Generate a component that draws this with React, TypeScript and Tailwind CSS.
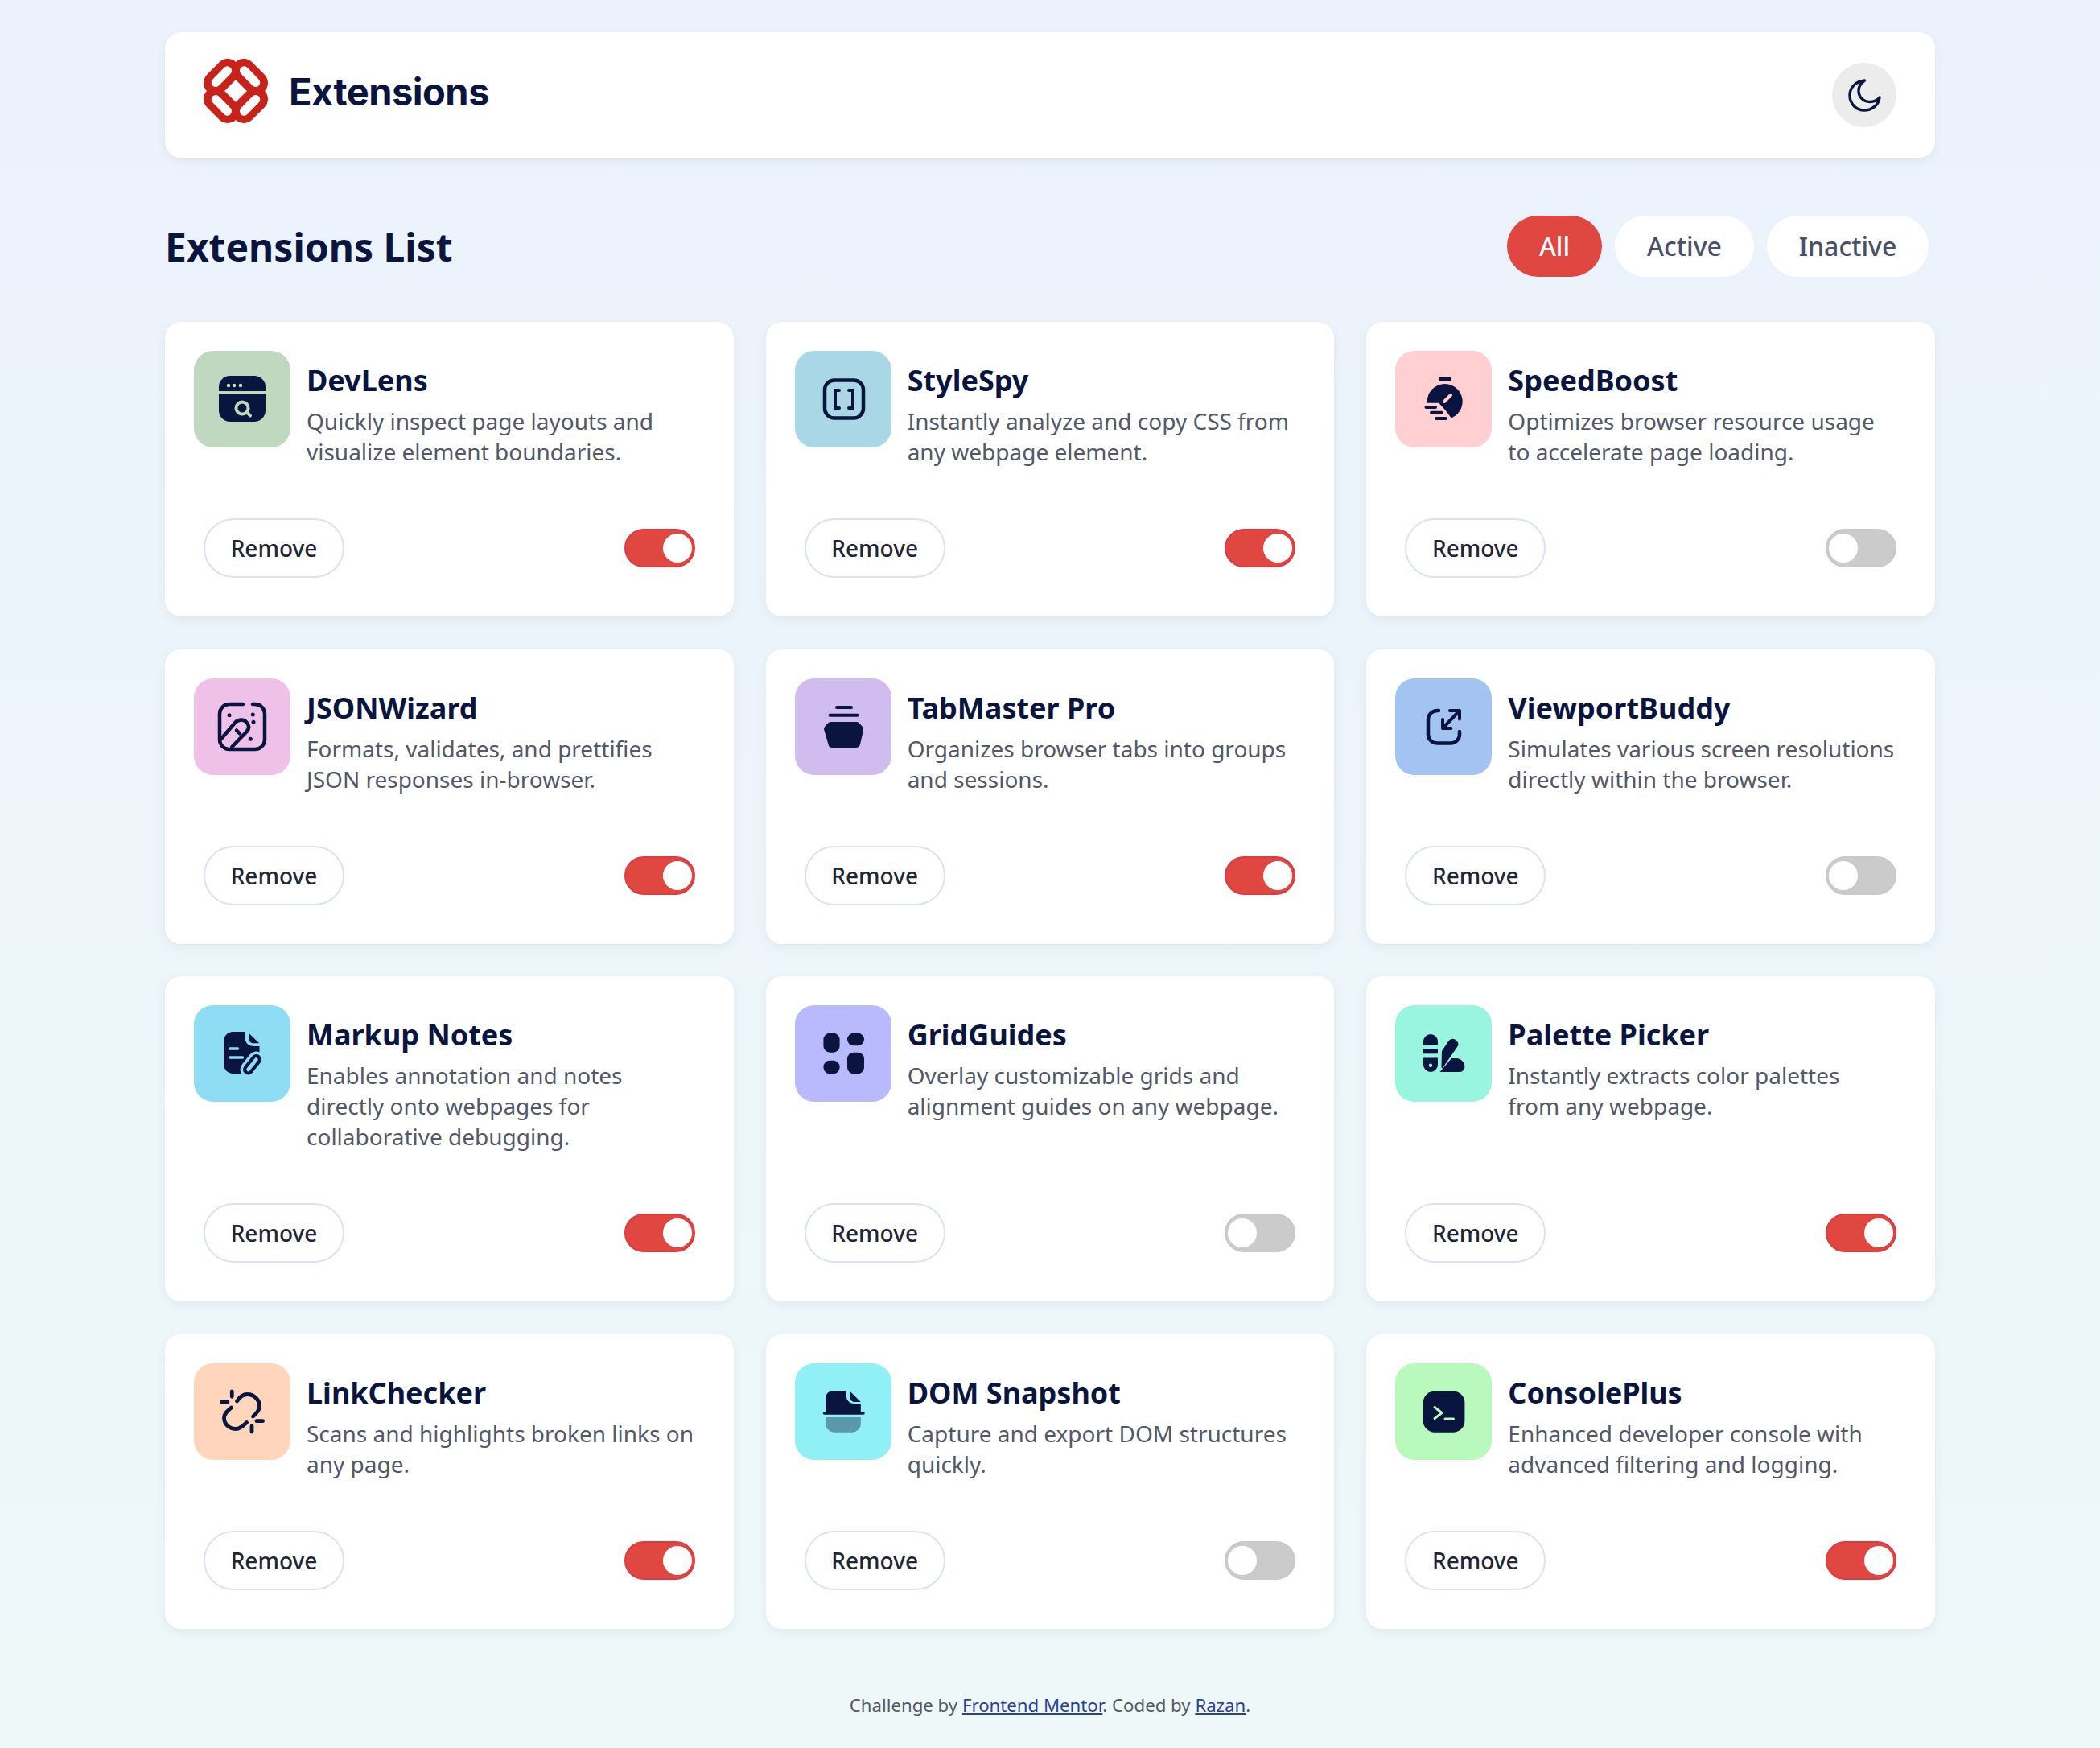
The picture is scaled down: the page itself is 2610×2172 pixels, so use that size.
import type { ReactNode } from "react";

const ink = "#09153e";

function Glyph({ children }: { children: ReactNode }) {
  return (
    <svg viewBox="0 0 120 120" className="h-[120px] w-[120px]" fill="none">
      {children}
    </svg>
  );
}

function DevLensIcon() {
  const bg = "#c0d8bf";
  return (
    <Glyph>
      <path d="M45 31h30a14 14 0 0 1 14 14v5H31v-5a14 14 0 0 1 14-14Z" fill={ink} />
      <path d="M31 54h58v20a14 14 0 0 1-14 14H45a14 14 0 0 1-14-14V54Z" fill={ink} />
      <circle cx="43" cy="43" r="2.3" fill={bg} />
      <circle cx="50" cy="43" r="2.3" fill={bg} />
      <circle cx="58" cy="43" r="2.3" fill={bg} />
      <circle cx="60" cy="71" r="7.5" stroke={bg} strokeWidth="4" />
      <path d="M66 76.5l4 4" stroke={bg} strokeWidth="4" strokeLinecap="round" />
    </Glyph>
  );
}

function StyleSpyIcon() {
  return (
    <Glyph>
      <rect x="37" y="36.5" width="48" height="47" rx="12" stroke={ink} strokeWidth="4.5" />
      <path d="M55 49H50V71H55M67 49H72V71H67" stroke={ink} strokeWidth="4" strokeLinecap="round" />
    </Glyph>
  );
}

function SpeedBoostIcon() {
  const bg = "#ffcfd1";
  return (
    <Glyph>
      <path d="M56 35h12" stroke={ink} strokeWidth="4.5" strokeLinecap="round" />
      <circle cx="61.7" cy="63" r="22" fill={ink} />
      <polygon points="37,64.7 54.3,64.7 62.7,74 70,84 70,90 37,90" fill={bg} />
      <path d="M61 63l8-8" stroke={bg} strokeWidth="4" strokeLinecap="round" />
      <path d="M38.5 70H50M45 76.7H57.5M51 84H63" stroke={ink} strokeWidth="4" strokeLinecap="round" />
    </Glyph>
  );
}

function JsonWizardIcon() {
  return (
    <Glyph>
      <path
        d="M61 32H44A12 12 0 0 0 32 44V76A12 12 0 0 0 44 88H76A12 12 0 0 0 88 76V44A12 12 0 0 0 76 32H73"
        stroke={ink}
        strokeWidth="4.5"
        strokeLinecap="round"
      />
      <path
        d="M34 75L50.7 55.5C55 50.5 61.5 50.5 65 54C69 58 69 62 65.7 66L47.3 85M53 64.5L57 68.5"
        stroke={ink}
        strokeWidth="4.5"
        strokeLinecap="round"
      />
      <circle cx="44" cy="45.7" r="2.5" fill={ink} />
      <circle cx="73.3" cy="45" r="2.5" fill={ink} />
      <circle cx="74" cy="54.3" r="2.5" fill={ink} />
      <circle cx="70.3" cy="75.3" r="2.5" fill={ink} />
    </Glyph>
  );
}

function TabMasterIcon() {
  return (
    <Glyph>
      <path d="M52 36H70M43.5 45.7H77.5" stroke={ink} strokeWidth="4" strokeLinecap="round" />
      <path
        d="M44 54H77C79 54 85 60 85 63C85 65 81.5 81 81 82C80 85 78 86 76 86H46C44 86 42 85 41.5 82L36 63C36 60 42 54 44 54Z"
        fill={ink}
      />
    </Glyph>
  );
}

function ViewportIcon() {
  return (
    <Glyph>
      <path
        d="M54 40H52A11 11 0 0 0 41 51V69.5A11 11 0 0 0 52 80.5H69A11 11 0 0 0 80 69.5V66"
        stroke={ink}
        strokeWidth="4.5"
        strokeLinecap="round"
      />
      <path d="M80 40L59 62M68 40H80V50.5M59 51V62H69.5" stroke={ink} strokeWidth="4" strokeLinecap="round" strokeLinejoin="round" />
    </Glyph>
  );
}

function MarkupIcon() {
  const bg = "#8fdcf5";
  return (
    <Glyph>
      <path
        d="M49 33H63.3V40C63.3 46.5 68 51 74.5 51H81.5V72C81.5 80 76 85 69 85H49C42 85 37 80 37 73V45C37 38 42 33 49 33Z"
        fill={ink}
      />
      <path d="M68 34.5L81.3 47.3H74C70.5 47.3 68 44.5 68 41Z" fill={ink} />
      <path d="M44.5 54H54.5M45 65H60.5" stroke={bg} strokeWidth="3.5" strokeLinecap="round" />
      <path d="M67.5 80L77.5 67.5" stroke={bg} strokeWidth="20" strokeLinecap="round" />
      <path d="M67.5 80L77.5 67.5" stroke={ink} strokeWidth="13" strokeLinecap="round" />
      <path d="M67.5 80L77.5 67.5" stroke={bg} strokeWidth="4.5" strokeLinecap="round" />
    </Glyph>
  );
}

function GridGuidesIcon() {
  return (
    <Glyph>
      <rect x="35.4" y="34.7" width="20.2" height="24" rx="8" fill={ink} />
      <rect x="35.4" y="68.7" width="20.2" height="16.6" rx="8" fill={ink} />
      <rect x="65" y="34.7" width="21" height="15.6" rx="7.8" fill={ink} />
      <rect x="65" y="58.7" width="21" height="26.6" rx="8" fill={ink} />
    </Glyph>
  );
}

function PaletteIcon() {
  const bg = "#9af5e0";
  return (
    <Glyph>
      <path d="M35 45a9 9 0 0 1 18 0v4.3H35Z" fill={ink} />
      <rect x="35" y="54.3" width="18" height="6" fill={ink} />
      <path d="M35 65.5h18V74a9 9 0 0 1-18 0Z" fill={ink} />
      <circle cx="44" cy="74.7" r="2.2" fill={bg} />
      <path d="M57.5 76L58 57L66 45C69 41 73 41 76 44C79 47 79 49 77 52L59 78C58 79 57.5 78 57.5 76Z" fill={ink} />
      <path d="M55.6 83L70 66H77C82 67 86.4 71 86.4 76C86.4 80 84 83 80 83Z" fill={ink} />
    </Glyph>
  );
}

function LinkCheckerIcon() {
  return (
    <Glyph>
      <path
        d="M53.5 47C56 43 60 38.5 66.5 38.5C75 38.5 81.5 45.5 81.5 53C81.5 59 77 63 73.5 66M46.5 55C42 59 37.5 62 37.5 68C37.5 75.5 44 81.5 52 81.5C58 81.5 62 77 65.5 73.5"
        stroke={ink}
        strokeWidth="4.8"
        strokeLinecap="round"
      />
      <path d="M47.3 35V41.3M34.5 48H42M78 71.7H85.5M72 78V85" stroke={ink} strokeWidth="4.8" strokeLinecap="round" />
    </Glyph>
  );
}

function SnapshotIcon() {
  return (
    <Glyph>
      <path d="M48 34H64V41.3C64 46 68 50 73 50H81.8V60H38V44C38 38 42 34 48 34Z" fill={ink} />
      <path d="M68.5 34.7L81.8 48H74C71 48 68.5 45.5 68.5 42Z" fill={ink} />
      <path d="M36.5 62H85" stroke={ink} strokeWidth="3.5" strokeLinecap="round" />
      <path d="M38 67H81.8V75A10.7 10.7 0 0 1 71 85.7H49A11 11 0 0 1 38 75Z" fill={ink} opacity="0.4" />
    </Glyph>
  );
}

function ConsoleIcon() {
  const bg = "#baf9bd";
  return (
    <Glyph>
      <rect x="34.8" y="34.7" width="51.6" height="51" rx="14" fill={ink} />
      <path d="M49 54.5L58 61.5L49 68.5M62 69H72.5" stroke={bg} strokeWidth="3" strokeLinecap="round" strokeLinejoin="round" />
    </Glyph>
  );
}

type Extension = {
  name: string;
  description: string;
  tint: string;
  icon: ReactNode;
  on: boolean;
};

const extensions: Extension[] = [
  { name: "DevLens", description: "Quickly inspect page layouts and visualize element boundaries.", tint: "bg-[#c0d8bf]", icon: <DevLensIcon />, on: true },
  { name: "StyleSpy", description: "Instantly analyze and copy CSS from any webpage element.", tint: "bg-[#a9d7e6]", icon: <StyleSpyIcon />, on: true },
  { name: "SpeedBoost", description: "Optimizes browser resource usage to accelerate page loading.", tint: "bg-[#ffcfd1]", icon: <SpeedBoostIcon />, on: false },
  { name: "JSONWizard", description: "Formats, validates, and prettifies JSON responses in-browser.", tint: "bg-[#efc0e8]", icon: <JsonWizardIcon />, on: true },
  { name: "TabMaster Pro", description: "Organizes browser tabs into groups and sessions.", tint: "bg-[#d0bcef]", icon: <TabMasterIcon />, on: true },
  { name: "ViewportBuddy", description: "Simulates various screen resolutions directly within the browser.", tint: "bg-[#a3c3f2]", icon: <ViewportIcon />, on: false },
  { name: "Markup Notes", description: "Enables annotation and notes directly onto webpages for collaborative debugging.", tint: "bg-[#8fdcf5]", icon: <MarkupIcon />, on: true },
  { name: "GridGuides", description: "Overlay customizable grids and alignment guides on any webpage.", tint: "bg-[#b9b9fd]", icon: <GridGuidesIcon />, on: false },
  { name: "Palette Picker", description: "Instantly extracts color palettes from any webpage.", tint: "bg-[#9af5e0]", icon: <PaletteIcon />, on: true },
  { name: "LinkChecker", description: "Scans and highlights broken links on any page.", tint: "bg-[#ffd6bb]", icon: <LinkCheckerIcon />, on: true },
  { name: "DOM Snapshot", description: "Capture and export DOM structures quickly.", tint: "bg-[#90f0f5]", icon: <SnapshotIcon />, on: false },
  { name: "ConsolePlus", description: "Enhanced developer console with advanced filtering and logging.", tint: "bg-[#baf9bd]", icon: <ConsoleIcon />, on: true },
];

function Toggle({ on }: { on: boolean }) {
  return (
    <div
      className={`flex h-12 w-[88px] items-center rounded-full border-2 p-0.5 ${
        on ? "justify-end border-[#dc3c41] bg-[#e04741]" : "justify-start border-[#c9c9c9] bg-[#cbcbcb]"
      }`}
    >
      <span className="h-9 w-9 rounded-full bg-white" />
    </div>
  );
}

function Card({ item }: { item: Extension }) {
  return (
    <div className="flex flex-col justify-between rounded-[20px] bg-white p-9 shadow-[0_4px_14px_rgba(9,21,62,0.06)]">
      <div className="flex gap-5">
        <div className={`h-[120px] w-[120px] shrink-0 rounded-[24px] ${item.tint}`}>{item.icon}</div>
        <div className="max-w-[482px] pt-[5px]">
          <h3 className="text-[36px] leading-[63px] font-bold text-[#09153e]">{item.name}</h3>
          <p className="text-[28px] leading-[38px] text-[#535868]">{item.description}</p>
        </div>
      </div>
      <div className="mt-16 flex items-center justify-between px-3 pb-3">
        <button className="h-[74px] w-[175px] rounded-full border-2 border-[#d8e3f6] bg-white text-[28px] font-medium text-[#1f2535]">
          Remove
        </button>
        <Toggle on={item.on} />
      </div>
    </div>
  );
}

export default function App() {
  return (
    <div className="min-h-screen bg-linear-to-b from-[#ebf2fc] to-[#eef8f9] font-['Noto_Sans',sans-serif]">
      <div className="mx-auto w-[2200px] pt-10 pb-[37px]">
        <header className="flex h-[156px] items-center justify-between rounded-[20px] bg-white px-12 shadow-[0_4px_14px_rgba(9,21,62,0.06)]">
          <div className="mb-2.5 flex items-center gap-[26px]">
            <svg viewBox="0 0 80 80" className="h-20 w-20" fill="none" strokeLinecap="round">
              <g stroke="#c8231a" strokeWidth="30">
                <path d="M15 30L30 15M50 15L65 30M15 50L30 65M65 50L50 65" />
              </g>
              <g stroke="#ffffff" strokeWidth="11">
                <path d="M15.2 29.5L29.5 14.8M50.5 14.8L64.8 29.5M15.2 50.5L29.5 65.2M64.8 50.5L50.5 65.2" />
              </g>
              <polygon points="40,29 51,40 40,51 29,40" fill="#ffffff" />
            </svg>
            <span className="font-['Inter',sans-serif] text-[47px] leading-none font-bold tracking-[-0.5px] text-[#09153e]">
              Extensions
            </span>
          </div>
          <button className="flex h-20 w-20 items-center justify-center rounded-full bg-[#ececec]">
            <svg viewBox="0 0 41 41" className="h-[41px] w-[41px]" fill="none">
              <path
                d="M20.5 2C9.5 3 2 10.5 2 20.5C2 31 10 39 20 39C30 39 38 32 39 23C36 27 32 28.5 27 28.5C18.5 28.5 13 22 13 15C13 9.5 16 5 20.5 2Z"
                stroke="#09153e"
                strokeWidth="3.4"
                strokeLinejoin="round"
              />
            </svg>
          </button>
        </header>

        <div className="mt-[72px] flex h-[76px] items-center justify-between pr-2">
          <h2 className="pt-0.5 text-[48px] font-bold text-[#09153e]">Extensions List</h2>
          <div className="flex gap-4 text-[32px] font-medium">
            <button className="h-[76px] w-[118px] rounded-full bg-[#e04741] text-white">All</button>
            <button className="h-[76px] w-[173px] rounded-full bg-white text-[#4a5068]">Active</button>
            <button className="h-[76px] w-[201px] rounded-full bg-white text-[#4a5068]">Inactive</button>
          </div>
        </div>

        <div className="mt-14 grid grid-cols-3 gap-x-10 gap-y-[40.6px]">
          {extensions.map((item) => (
            <Card key={item.name} item={item} />
          ))}
        </div>

        <footer className="mt-[78px] text-center text-[22.2px] leading-[34px] text-[#535868]">
          Challenge by{" "}
          <a href="#" className="text-[#2a3f9d] underline">
            Frontend Mentor
          </a>
          . Coded by{" "}
          <a href="#" className="text-[#2a3f9d] underline">
            Razan
          </a>
          .
        </footer>
      </div>
    </div>
  );
}
